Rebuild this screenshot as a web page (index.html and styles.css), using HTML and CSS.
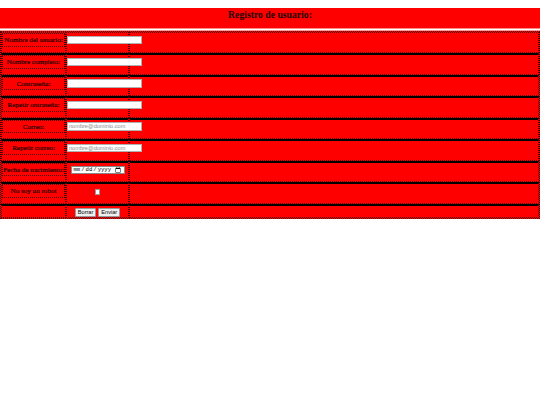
FILE: index.html
```html
<!DOCTYPE html>
<html lang="es">
<head>
<meta charset="utf-8">
<title>Registro de usuario</title>
<link rel="stylesheet" href="styles.css">
</head>
<body>
<h3 class="title">Registro de usuario:</h3>
<div class="sep"></div>
<form class="form">
<table class="grid">
<tr><td class="lab"><label>Nombre del usuario:</label></td><td class="fld"><input type="text" class="txt"></td><td class="rest"></td></tr>
<tr><td class="lab"><label>Nombre completo:</label></td><td class="fld"><input type="text" class="txt"></td><td class="rest"></td></tr>
<tr><td class="lab"><label>Contraseña:</label></td><td class="fld"><input type="password" class="txt"></td><td class="rest"></td></tr>
<tr><td class="lab"><label>Repetir ontraseña:</label></td><td class="fld"><input type="password" class="txt"></td><td class="rest"></td></tr>
<tr><td class="lab"><label>Correo:</label></td><td class="fld"><input type="email" class="txt" placeholder="nombre@dominio.com"></td><td class="rest"></td></tr>
<tr><td class="lab"><label>Repetir correo:</label></td><td class="fld"><input type="email" class="txt" placeholder="nombre@dominio.com"></td><td class="rest"></td></tr>
<tr><td class="lab"><label>Fecha de nacimiento:</label></td><td class="fld"><input type="date" class="date"></td><td class="rest"></td></tr>
<tr><td class="lab"><label>No soy un robot</label></td><td class="fld"><input type="checkbox" class="chk"></td><td class="rest"></td></tr>
<tr class="last"><td class="lab"></td><td class="fld"><button type="reset" class="btn">Borrar</button><button type="submit" class="btn">Enviar</button></td><td class="rest"></td></tr>
</table>
</form>
</body>
</html>
```
FILE: styles.css
```css
html, body {
  margin: 0;
  padding: 0;
  background: #fff;
}
body {
  padding-top: 8px;
  font-family: "Liberation Serif", serif;
}
.title {
  margin: 0;
  background: #f00;
  height: 20px;
  box-sizing: border-box;
  padding-top: 1px;
  text-align: center;
  font-size: 9.7px;
  line-height: 11px;
  font-weight: bold;
  color: #200;
}
.sep {
  height: 1px;
  border-top: 1px solid #ff8a8a;
  border-bottom: 1px solid #ff9a9a;
  background: #fff;
}
.form {
  margin: 0;
}
.grid {
  width: 540px;
  table-layout: fixed;
  border-collapse: separate;
  border-spacing: 0;
  border: 1px dotted #400;
  background: #f00;
  color: #000;
  font-size: 7.1px;
  line-height: 8px;
}
.grid td {
  box-sizing: border-box;
  height: 21px;
  padding: 0;
  vertical-align: top;
  border: 1px dotted #500;
}
.grid tr + tr td {
  border-top: 2px solid #000;
  height: 21.5px;
}
.grid tr.last td {
  height: 14.5px;
}
.lab {
  width: 65px;
  text-align: center;
}
.lab label {
  display: block;
  border: 1px dotted #400;
  height: 13.5px;
  box-sizing: border-box;
  padding-top: 1px;
  line-height: 10px;
  white-space: nowrap;
  -webkit-text-stroke: 0.15px #200;
}
.fld {
  width: 63px;
  text-align: center;
  white-space: nowrap;
  padding-top: 2.7px !important;
  line-height: 0;
}
.txt {
  box-sizing: border-box;
  width: 75px;
  height: 8.5px;
  margin: 0;
  padding: 0 1px;
  border: 1px solid #b0b0b0;
  background: #fff;
  font-family: "Liberation Sans", sans-serif;
  font-size: 5.6px;
  vertical-align: top;
}
.txt::placeholder {
  color: #8a8a8a;
}
.date {
  box-sizing: border-box;
  width: 54px;
  height: 8.5px;
  margin: 0;
  padding: 0 1px;
  border: 1px solid #888;
  background: #fff;
  font-family: "Liberation Mono", monospace;
  font-size: 5.6px;
  vertical-align: top;
  margin-top: 0.5px;
}
.chk {
  appearance: none;
  -webkit-appearance: none;
  box-sizing: border-box;
  margin: 2.5px 0 0;
  width: 5.5px;
  height: 5.5px;
  border: 0.5px solid #999;
  background: #fff;
  border-radius: 0.5px;
  vertical-align: top;
}
.btn {
  box-sizing: border-box;
  height: 8.5px;
  margin: 0 1px;
  padding: 0 2px;
  border: 1px solid #999;
  border-radius: 1px;
  background: #efefef;
  font-family: "Liberation Sans", sans-serif;
  font-size: 5.6px;
  line-height: 6px;
  vertical-align: top;
  color: #000;
}
.grid tr.last .fld {
  padding-top: 2.5px !important;
}
```
